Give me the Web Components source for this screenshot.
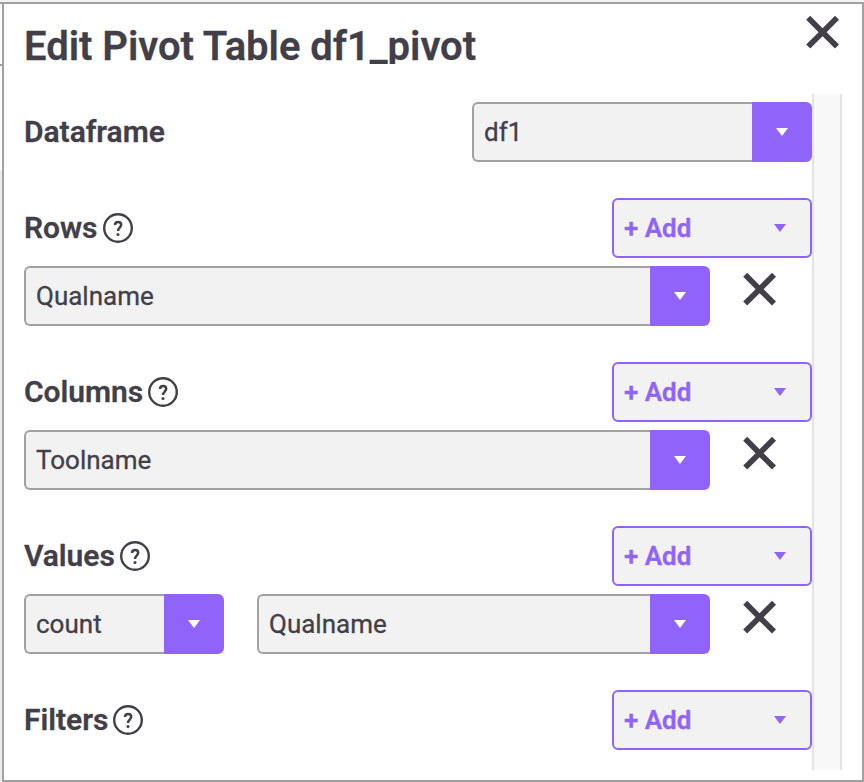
<!DOCTYPE html>
<html lang="en"><head><meta charset="utf-8"><title>Edit Pivot Table</title>
<style>
html,body{margin:0;height:100%;overflow:hidden}
body{background:#fff;font-family:Roboto,sans-serif;color:#423f49;-webkit-text-stroke:.3px}
</style></head><body>
<pivot-panel heading="Edit Pivot Table df1_pivot">
  <pivot-section label="Dataframe"><pivot-select slot="action" style="width:340px">df1</pivot-select></pivot-section>
  <pivot-section label="Rows" help><add-button slot="action"></add-button>
    <pivot-row><pivot-select style="flex:1">Qualname</pivot-select></pivot-row></pivot-section>
  <pivot-section label="Columns" help><add-button slot="action"></add-button>
    <pivot-row><pivot-select style="flex:1">Toolname</pivot-select></pivot-row></pivot-section>
  <pivot-section label="Values" help><add-button slot="action"></add-button>
    <pivot-row><pivot-select style="width:200px">count</pivot-select><pivot-select style="flex:1">Qualname</pivot-select></pivot-row></pivot-section>
  <pivot-section label="Filters" help><add-button slot="action"></add-button></pivot-section>
</pivot-panel>
<script>
const define=(name,html,init)=>customElements.define(name,class extends HTMLElement{
  constructor(){super();this.attachShadow({mode:'open'}).innerHTML=html;}
  connectedCallback(){if(init)init(this,this.shadowRoot);}
});

define('close-icon',`<style>:host{display:block;width:34px;height:34px}svg{display:block}</style>
<svg width="34" height="34" viewBox="0 0 34 34"><path d="M4.2 .8 16.6 13.2 29 .8 33 4.8 20.6 17.2 33 29.6 29 33.6 16.6 21.2 4.2 33.6 .2 29.6 12.6 17.2 .2 4.8Z" fill="#423f49"/></svg>`);

define('help-icon',`<style>:host{display:block;width:30px;height:30px}svg{display:block}</style>
<svg width="30" height="30" viewBox="0 0 30 30" fill="none" stroke="#423f49"><circle cx="15" cy="15" r="13.8" stroke-width="2.4"/><path d="M12 12C12.1 10.1 13.2 9 15.1 9C17.1 9 18.2 10.1 18.2 11.8C18.2 14.6 15 14.6 15 18" stroke-width="2.5"/><circle cx="15" cy="21.4" r="1.5" fill="#423f49" stroke="none"/></svg>`);

define('down-arrow',`<style>:host{display:block;width:12px;height:8px}svg{display:block}</style>
<svg width="12" height="8" viewBox="0 0 12 8"><path d="M0 0H12L6 8Z" fill="currentColor"/></svg>`);

define('pivot-select',`<style>
:host{display:flex;box-sizing:border-box;height:60px;min-width:0}
.value{flex:1;box-sizing:border-box;border:2px solid #a1a1a1;border-right:0;border-radius:6px 0 0 6px;background:#f2f2f2;padding-left:10px;font-size:26px;line-height:56px;white-space:nowrap}
.arrow{width:60px;border-radius:0 6px 6px 0;background:#9064fa;color:#fff;display:grid;place-items:center}
</style><div class="value"><slot></slot></div><div class="arrow"><down-arrow></down-arrow></div>`);

define('add-button',`<style>
:host{display:flex;align-items:center;justify-content:space-between;box-sizing:border-box;width:200px;height:60px;border:2px solid #9064fa;border-radius:6px;background:#f2f2f2;padding:0 24px 0 10px;color:#9064fa;font-size:26px;font-weight:600;line-height:56px}
</style><span>+ Add</span><down-arrow></down-arrow>`);

define('pivot-row',`<style>
:host{display:flex;height:60px;margin-top:8px}
.fields{display:flex;gap:33px;width:686px}
close-icon{margin:6px 0 0 33px}
</style><div class="fields"><slot></slot></div><close-icon></close-icon>`);

define('pivot-section',`<style>
:host{display:block}
.head{display:flex;align-items:center;justify-content:space-between;height:60px}
.label{display:flex;align-items:center;gap:5px;font-size:30px;font-weight:600;line-height:60px}
.label span{letter-spacing:-.03px}
help-icon[hidden]{display:none}
</style><div class="head"><div class="label"><span></span><help-icon></help-icon></div><slot name="action"></slot></div><slot></slot>`,
(el,root)=>{root.querySelector('span').textContent=el.getAttribute('label');root.querySelector('help-icon').hidden=!el.hasAttribute('help');});

define('pivot-panel',`<style>
:host{display:grid;grid-template-columns:2px 1fr;box-sizing:border-box;height:782px;padding-top:2px;background:#f2f2f2}
.edge{display:flex;flex-direction:column;background:#ebebeb}
.edge i{height:60px;background:#fff;border-top:2px solid #a1a1a1;border-bottom:2px solid #a1a1a1}
.edge b{height:104px;background:#fff}
.panel{box-sizing:border-box;border:2px solid #a1a1a1;background:#fff}
header{display:flex;justify-content:space-between;height:90px}
h1{margin:18px 0 0 20px;font-size:40px;line-height:50px;letter-spacing:-.04px;height:42px;overflow:hidden;font-weight:600;white-space:nowrap}
header close-icon{margin:11px 22px 0 0}
.scroll{display:flex;height:676px}
main{width:788px;margin-left:20px;padding-top:8px;box-sizing:border-box;display:flex;flex-direction:column;gap:36px}
.track{box-sizing:border-box;width:30px;border:solid #e4e4e4;border-width:0 2px;background:#f8f8f8}
</style><div class="edge"><i></i><b></b></div><div class="panel"><header><h1></h1><close-icon></close-icon></header><div class="scroll"><main><slot></slot></main><div class="track"></div></div></div>`,
(el,root)=>{root.querySelector('h1').textContent=el.getAttribute('heading');});
</script></body></html>
